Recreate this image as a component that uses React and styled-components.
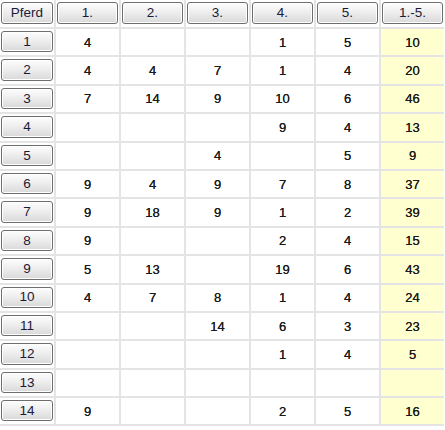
import React from "react";
import styled, { createGlobalStyle } from "styled-components";

const Global = createGlobalStyle`
  html, body { margin: 0; padding: 0; background: #ffffff; }
  body { font-family: "Liberation Sans", Arial, sans-serif; }
`;

const Table = styled.div`
  display: grid;
  grid-template-columns: 54px repeat(6, 63px);
  grid-template-rows: 27px repeat(14, 26.4px);
  gap: 2px;
  width: 444px;
  background: #e4e4e4;
  border-bottom: 2px solid #e4e4e4;
`;

const Cell = styled.div`
  display: flex;
  align-items: center;
  justify-content: center;
  background: ${(p) => (p.$sum ? "#ffffcf" : "#ffffff")};
  color: #1a1a1a;
  font-size: 13px;
  text-shadow: 0 0 0.15px #1a1a1a;
`;

const ButtonCell = styled.div`
  display: flex;
  align-items: stretch;
  background: #ffffff;
  padding: 2px 1px 3px 1px;
`;

const Btn = styled.div`
  flex: 1;
  display: flex;
  align-items: center;
  justify-content: center;
  border: 1px solid #6e6e6e;
  border-radius: 3px;
  background: linear-gradient(#fdfdfd 0%, #f0f0f0 40%, #d9d9d9 100%);
  box-shadow: inset 0 0 0 1px #ffffff;
  color: #1a1a38;
  font-size: 13.5px;
  line-height: 1;
`;

const headers = ["Pferd", "1.", "2.", "3.", "4.", "5.", "1.-5."];

const rows = [
  [4, "", "", 1, 5, 10],
  [4, 4, 7, 1, 4, 20],
  [7, 14, 9, 10, 6, 46],
  ["", "", "", 9, 4, 13],
  ["", "", 4, "", 5, 9],
  [9, 4, 9, 7, 8, 37],
  [9, 18, 9, 1, 2, 39],
  [9, "", "", 2, 4, 15],
  [5, 13, "", 19, 6, 43],
  [4, 7, 8, 1, 4, 24],
  ["", "", 14, 6, 3, 23],
  ["", "", "", 1, 4, 5],
  ["", "", "", "", "", ""],
  [9, "", "", 2, 5, 16],
];

export default function App() {
  return (
    <>
      <Global />
      <Table>
        {headers.map((h) => (
          <ButtonCell key={h}>
            <Btn>{h}</Btn>
          </ButtonCell>
        ))}
        {rows.map((r, i) => (
          <React.Fragment key={i}>
            <ButtonCell>
              <Btn>{i + 1}</Btn>
            </ButtonCell>
            {r.map((v, j) => (
              <Cell key={j} $sum={j === 5}>
                {v}
              </Cell>
            ))}
          </React.Fragment>
        ))}
      </Table>
    </>
  );
}
